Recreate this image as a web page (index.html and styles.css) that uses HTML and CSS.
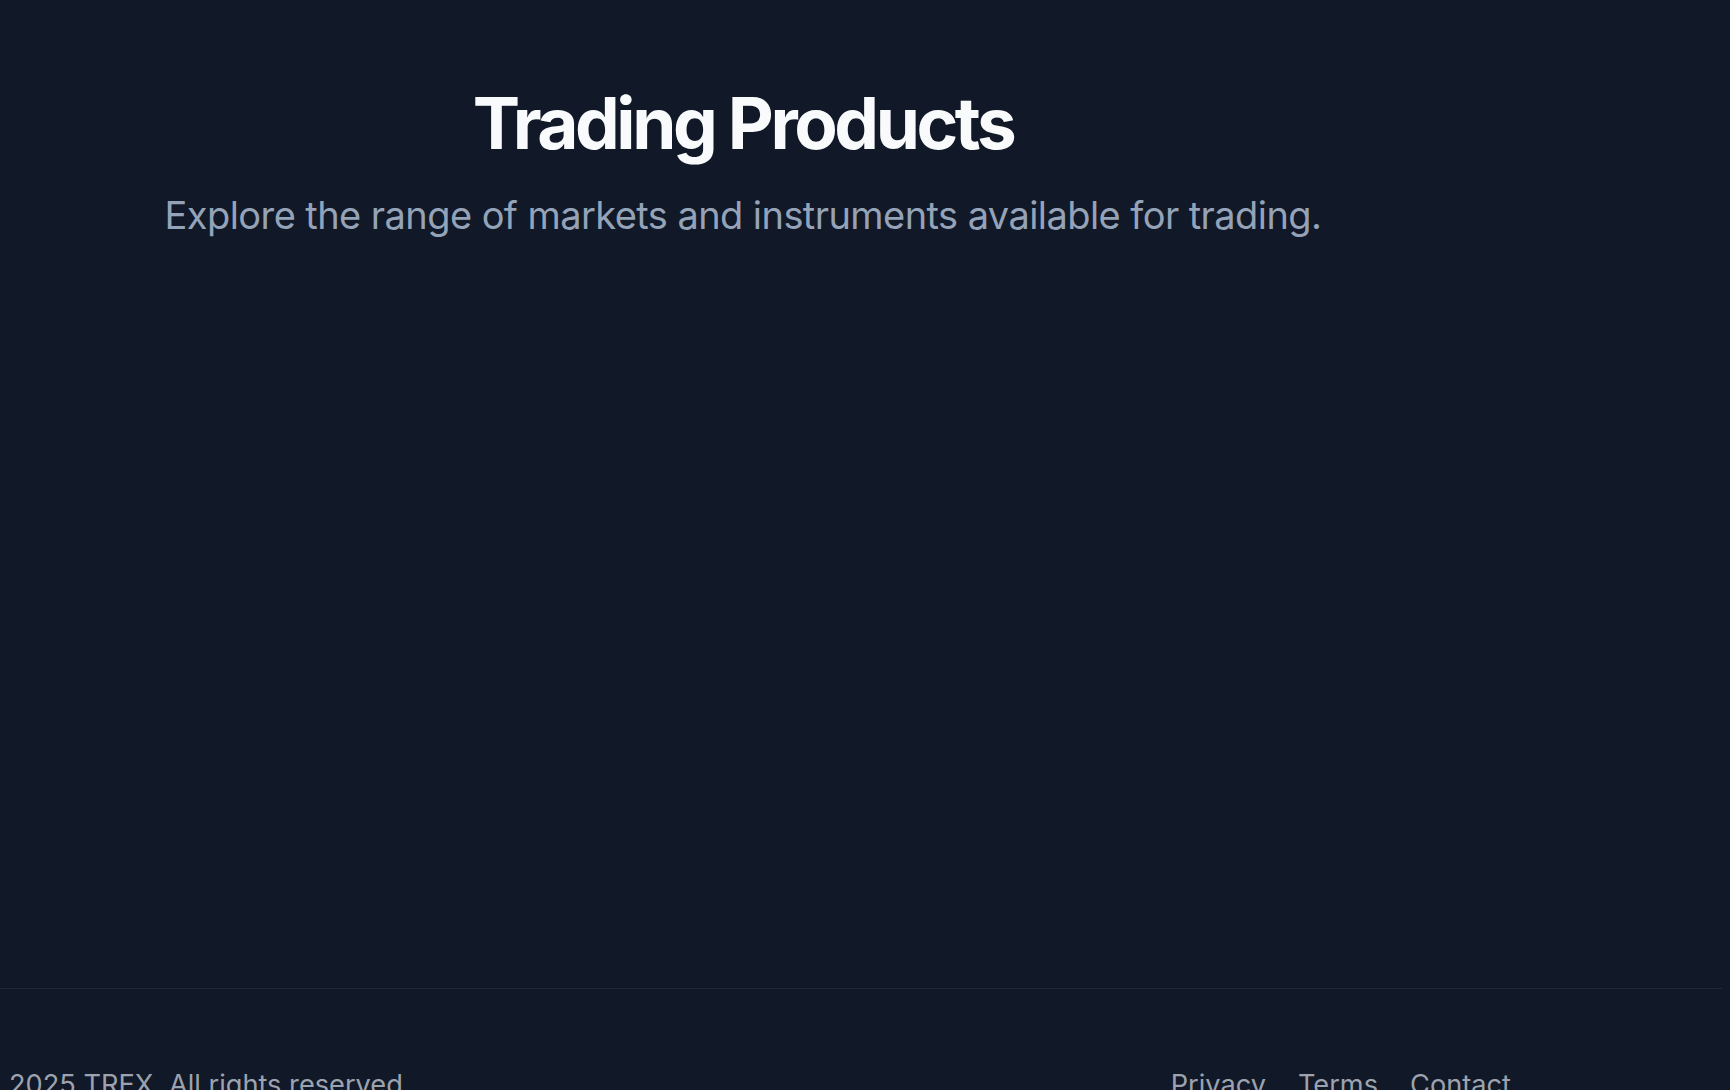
FILE: index.html
```html
<!DOCTYPE html>
<html lang="en">
<head>
<meta charset="utf-8">
<title>Trading Products</title>
<link rel="stylesheet" href="styles.css">
</head>
<body>
<main class="main">
  <section class="hero">
    <h1 class="title">Trading Products</h1>
    <p class="subtitle">Explore the range of markets and instruments available for trading.</p>
  </section>
</main>
<footer class="footer">
  <div class="footer-inner">
    <span class="copyright">2025 TREX. All rights reserved.</span>
    <nav class="links">
      <a href="#" class="link">Privacy</a>
      <a href="#" class="link">Terms</a>
      <a href="#" class="link">Contact</a>
    </nav>
  </div>
</footer>
</body>
</html>
```

FILE: styles.css
```css
html, body {
  margin: 0;
  padding: 0;
  background: #111827;
  overflow: hidden;
}
body {
  font-family: Inter, "Noto Sans", sans-serif;
  width: 1730px;
  height: 1090px;
}
.main {
  height: 988px;
  width: 1722px;
}
.hero {
  width: 1486px;
  text-align: center;
  padding-top: 84px;
}
.title {
  margin: 0;
  font-size: 71px;
  font-weight: 700;
  letter-spacing: -0.048em;
  line-height: 1.1;
  color: #f9fafb;
}
.subtitle {
  margin: 29px 0 0;
  font-size: 38px;
  letter-spacing: -0.015em;
  line-height: 1.3;
  color: #94a3b8;
}
.footer {
  width: 1722px;
  border-top: 1px solid #1f2937;
}
.footer-inner {
  width: 1502px;
  padding: 79px 0 0 9px;
  display: flex;
  justify-content: space-between;
  font-size: 27.2px;
  color: #9ca3af;
}
.links {
  display: flex;
  gap: 32px;
}
.link {
  color: #9ca3af;
  text-decoration: none;
}
```
